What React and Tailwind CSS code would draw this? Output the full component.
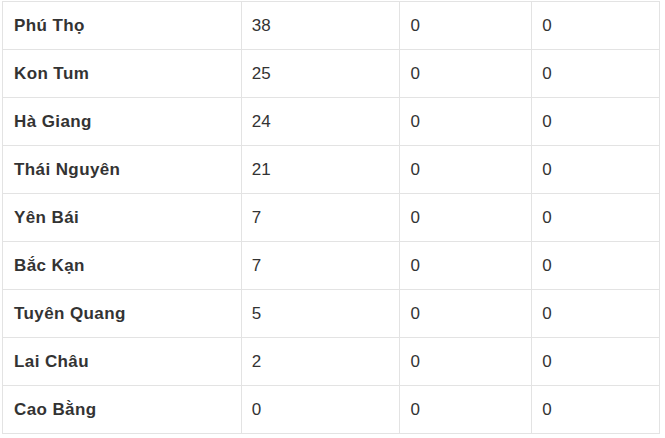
const rows = [
  ["Phú Thọ", "38", "0", "0"],
  ["Kon Tum", "25", "0", "0"],
  ["Hà Giang", "24", "0", "0"],
  ["Thái Nguyên", "21", "0", "0"],
  ["Yên Bái", "7", "0", "0"],
  ["Bắc Kạn", "7", "0", "0"],
  ["Tuyên Quang", "5", "0", "0"],
  ["Lai Châu", "2", "0", "0"],
  ["Cao Bằng", "0", "0", "0"],
];

export default function App() {
  return (
    <div
      className="w-[665px] h-[438px] bg-white pt-[1px] pl-[2px] overflow-hidden"
      style={{ fontFamily: '"Liberation Sans", Arial, sans-serif' }}
    >
      <table className="border-collapse w-[658px] text-[17px] text-[#333]">
        <colgroup>
          <col className="w-[239px]" />
          <col className="w-[159px]" />
          <col className="w-[132px]" />
          <col className="w-[128px]" />
        </colgroup>
        <tbody>
          {rows.map((r) => (
            <tr key={r[0]} className="h-[48px]">
              <td className="border border-[#e3e3e3] p-0 px-[11px] font-bold tracking-[0.4px] align-middle">{r[0]}</td>
              <td className="border border-[#e3e3e3] p-0 px-[10px] align-middle">{r[1]}</td>
              <td className="border border-[#e3e3e3] p-0 px-[10px] align-middle">{r[2]}</td>
              <td className="border border-[#e3e3e3] p-0 px-[10px] align-middle">{r[3]}</td>
            </tr>
          ))}
        </tbody>
      </table>
    </div>
  );
}
